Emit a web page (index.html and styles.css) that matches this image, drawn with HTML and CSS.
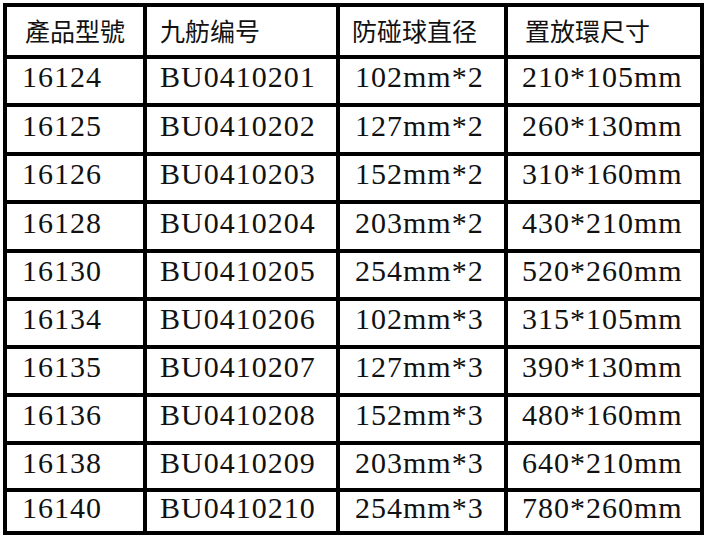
FILE: index.html
```html
<!DOCTYPE html>
<html lang="zh-Hant">
<head>
<meta charset="utf-8">
<title>防碰球規格表</title>
<link rel="stylesheet" href="styles.css">
</head>
<body>
<div class="page">
  <div class="table">
    <div class="cell head c1">產品型號</div>
    <div class="cell head c2">九舫编号</div>
    <div class="cell head c3">防碰球直径</div>
    <div class="cell head c4">置放環尺寸</div>

    <div class="cell c1">16124</div><div class="cell c2">BU0410201</div><div class="cell c3">102mm*2</div><div class="cell c4">210*105mm</div>
    <div class="cell c1">16125</div><div class="cell c2">BU0410202</div><div class="cell c3">127mm*2</div><div class="cell c4">260*130mm</div>
    <div class="cell c1">16126</div><div class="cell c2">BU0410203</div><div class="cell c3">152mm*2</div><div class="cell c4">310*160mm</div>
    <div class="cell c1">16128</div><div class="cell c2">BU0410204</div><div class="cell c3">203mm*2</div><div class="cell c4">430*210mm</div>
    <div class="cell c1">16130</div><div class="cell c2">BU0410205</div><div class="cell c3">254mm*2</div><div class="cell c4">520*260mm</div>
    <div class="cell c1">16134</div><div class="cell c2">BU0410206</div><div class="cell c3">102mm*3</div><div class="cell c4">315*105mm</div>
    <div class="cell c1">16135</div><div class="cell c2">BU0410207</div><div class="cell c3">127mm*3</div><div class="cell c4">390*130mm</div>
    <div class="cell c1">16136</div><div class="cell c2">BU0410208</div><div class="cell c3">152mm*3</div><div class="cell c4">480*160mm</div>
    <div class="cell c1">16138</div><div class="cell c2">BU0410209</div><div class="cell c3">203mm*3</div><div class="cell c4">640*210mm</div>
    <div class="cell c1">16140</div><div class="cell c2">BU0410210</div><div class="cell c3">254mm*3</div><div class="cell c4">780*260mm</div>
  </div>
</div>
</body>
</html>
```

FILE: styles.css
```css
html, body {
  margin: 0;
  padding: 0;
  background: #ffffff;
}

.page {
  padding: 3px 0 0 3px;
}

.table {
  display: grid;
  width: max-content;
  grid-template-columns: 136px 189px 164px 192px;
  grid-template-rows: 48px 44px 45px 44px 45px 44px 44px 44px 44px 43px 39px;
  gap: 4px;
  padding: 4px;
  background: #000000;
}

.cell {
  background: #ffffff;
  color: #111111;
  display: flex;
  align-items: center;
  font-family: "Liberation Serif", "DejaVu Serif", serif;
  font-size: 30px;
  letter-spacing: 1px;
  line-height: 1;
  padding-bottom: 8px;
  white-space: nowrap;
  overflow: hidden;
}

.cell.head {
  font-family: "Noto Sans CJK TC", "Noto Sans CJK SC", sans-serif;
  font-size: 25px;
  letter-spacing: 0;
  padding-bottom: 2px;
}

.c1 { padding-left: 15px; }
.c2 { padding-left: 13px; }
.c3 { padding-left: 15px; }
.c4 { padding-left: 14px; }

.head.c1 { padding-left: 18px; }
.head.c2 { padding-left: 13px; }
.head.c3 { padding-left: 12px; }
.head.c4 { padding-left: 17px; }
```
